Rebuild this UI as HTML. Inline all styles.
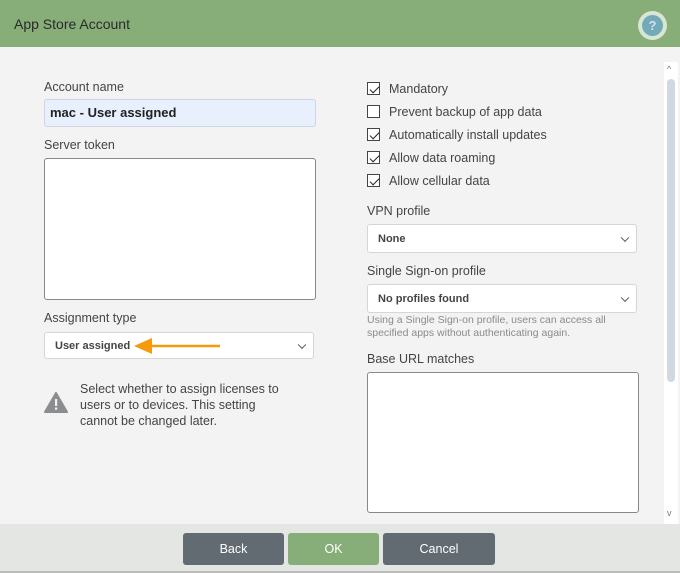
<!DOCTYPE html>
<html><head><meta charset="utf-8"><style>
*{box-sizing:border-box;margin:0;padding:0}
body{width:680px;height:573px;background:#f3f3f3;font-family:"Liberation Sans",sans-serif;position:relative;overflow:hidden;color:#333}
.a{position:absolute}
.lbl{font-size:12.5px;color:#444}
.box{background:#fff;border:1px solid #888;border-radius:3px}
.sel{background:#fff;border:1px solid #d6d6d6;border-radius:3px;font-size:11px;font-weight:bold;color:#444;padding-left:10px;display:flex;align-items:center}
.chev{position:absolute;right:8px;top:50%;width:6px;height:6px;border-right:1.3px solid #555;border-bottom:1.3px solid #555;transform:translateY(-70%) rotate(45deg)}
.cb{position:absolute;width:13px;height:13px;border:1px solid #444;background:#fff}
.cb.c::after{content:"";position:absolute;left:3.5px;top:0.5px;width:4px;height:8px;border-right:1px solid #222;border-bottom:1px solid #222;transform:rotate(45deg)}
.cbl{position:absolute;font-size:12.5px;color:#444}
.btn{position:absolute;top:533px;height:32px;border-radius:3px;color:#fff;font-size:12.5px;display:flex;align-items:center;justify-content:center}
</style></head><body>
<div class="a" style="left:0;top:0;width:680px;height:47px;background:#87ad78"></div>
<div class="a" style="left:14px;top:16px;font-size:14px;color:#2a2a2a">App Store Account</div>
<div class="a" style="left:638px;top:11px;width:29px;height:29px;border-radius:50%;background:#d9e6d3"></div>
<div class="a" style="left:642px;top:15px;width:21px;height:21px;border-radius:50%;background:#72aab8;color:#dde;font-size:13px;font-weight:bold;text-align:center;line-height:21px">?</div>

<div class="a lbl" style="left:44px;top:80px">Account name</div>
<div class="a" style="left:44px;top:99px;width:272px;height:28px;background:#e8f0fe;border:1px solid #cfd6e2;border-radius:3px;font-size:13px;font-weight:bold;color:#222;padding-left:5px;line-height:26px">mac - User assigned</div>
<div class="a lbl" style="left:44px;top:138px">Server token</div>
<div class="a box" style="left:44px;top:158px;width:272px;height:142px"></div>
<div class="a lbl" style="left:44px;top:311px">Assignment type</div>
<div class="a sel" style="left:44px;top:332px;width:270px;height:27px">User assigned<div class="chev"></div></div>
<svg class="a" style="left:132px;top:336px" width="90" height="20"><line x1="14" y1="10" x2="88" y2="10" stroke="#f59a0c" stroke-width="2.5"/><polygon points="2,10 20,2 20,18" fill="#f59a0c"/></svg>
<svg class="a" style="left:44px;top:392px" width="24" height="21"><polygon points="12,1 23,20 1,20" fill="#8a8e90" stroke="#8a8e90" stroke-linejoin="round" stroke-width="2"/><rect x="11" y="7" width="2.2" height="7" fill="#f3f3f3"/><rect x="11" y="15.5" width="2.2" height="2.2" fill="#f3f3f3"/></svg>
<div class="a lbl" style="left:80px;top:381px;width:215px;line-height:16px">Select whether to assign licenses to users or to devices. This setting cannot be changed later.</div>

<div class="cb c" style="left:367px;top:82px"></div><div class="cbl" style="left:389px;top:82px">Mandatory</div>
<div class="cb" style="left:367px;top:105px"></div><div class="cbl" style="left:389px;top:105px">Prevent backup of app data</div>
<div class="cb c" style="left:367px;top:128px"></div><div class="cbl" style="left:389px;top:128px">Automatically install updates</div>
<div class="cb c" style="left:367px;top:151px"></div><div class="cbl" style="left:389px;top:151px">Allow data roaming</div>
<div class="cb c" style="left:367px;top:174px"></div><div class="cbl" style="left:389px;top:174px">Allow cellular data</div>
<div class="a lbl" style="left:367px;top:204px">VPN profile</div>
<div class="a sel" style="left:367px;top:224px;width:270px;height:29px">None<div class="chev"></div></div>
<div class="a lbl" style="left:367px;top:264px">Single Sign-on profile</div>
<div class="a sel" style="left:367px;top:284px;width:270px;height:29px">No profiles found<div class="chev"></div></div>
<div class="a" style="left:367px;top:314px;width:270px;font-size:10.5px;color:#8a8a8a;line-height:13px">Using a Single Sign-on profile, users can access all specified apps without authenticating again.</div>
<div class="a lbl" style="left:367px;top:352px">Base URL matches</div>
<div class="a box" style="left:367px;top:372px;width:272px;height:141px"></div>

<div class="a" style="left:664px;top:62px;width:14px;height:462px;background:#fff"></div>
<div class="a" style="left:667px;top:79px;width:8px;height:303px;background:#d0d8e0;border-radius:4px"></div>
<div class="a" style="left:667px;top:64px;font-size:9px;color:#777">^</div>
<div class="a" style="left:667px;top:508px;font-size:9px;color:#777">v</div>

<div class="a" style="left:0;top:524px;width:680px;height:49px;background:#e4e6e4;border-bottom:2px solid #bbb"></div>
<div class="btn" style="left:183px;width:101px;background:#636b72">Back</div>
<div class="btn" style="left:288px;width:91px;background:#87ad78">OK</div>
<div class="btn" style="left:383px;width:112px;background:#636b72">Cancel</div>
</body></html>
